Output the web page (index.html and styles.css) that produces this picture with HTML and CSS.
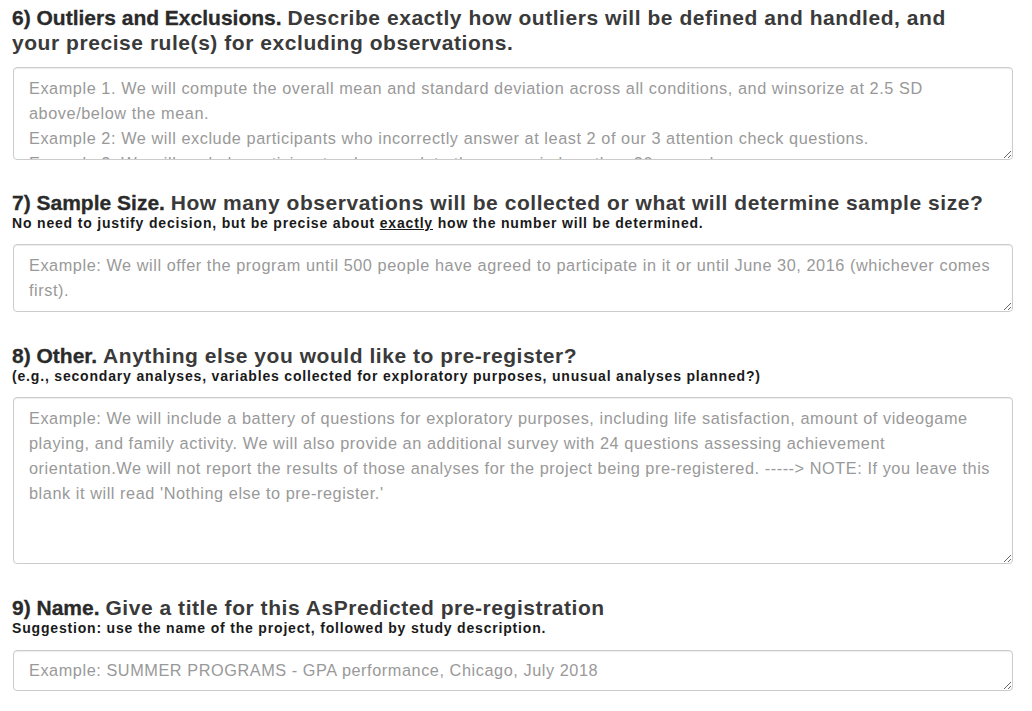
FILE: index.html
```html
<!DOCTYPE html>
<html>
<head>
<meta charset="utf-8">
<link rel="stylesheet" href="styles.css">
</head>
<body>
<div class="form">
  <div class="question first">
    <h4 class="q-title"><b>6) Outliers and Exclusions.</b> <span>Describe exactly how outliers will be defined and handled, and<br>your precise rule(s) for excluding observations.</span></h4>
    <textarea class="field h-92" placeholder="Example 1. We will compute the overall mean and standard deviation across all conditions, and winsorize at 2.5 SD above/below the mean.&#10;Example 2: We will exclude participants who incorrectly answer at least 2 of our 3 attention check questions.&#10;Example 3: We will exclude participants who complete the survey in less than 30 seconds."></textarea>
  </div>
  <div class="question">
    <h4 class="q-title"><b>7) Sample Size.</b> <span>How many observations will be collected or what will determine sample size?</span></h4>
    <div class="q-sub">No need to justify decision, but be precise about <u>exactly</u> how the number will be determined.</div>
    <textarea class="field h-67" placeholder="Example: We will offer the program until 500 people have agreed to participate in it or until June 30, 2016 (whichever comes first)."></textarea>
  </div>
  <div class="question">
    <h4 class="q-title"><b>8) Other.</b> <span>Anything else you would like to pre-register?</span></h4>
    <div class="q-sub">(e.g., secondary analyses, variables collected for exploratory purposes, unusual analyses planned?)</div>
    <textarea class="field h-166" placeholder="Example: We will include a battery of questions for exploratory purposes, including life satisfaction, amount of videogame playing, and family activity. We will also provide an additional survey with 24 questions assessing achievement orientation.We will not report the results of those analyses for the project being pre-registered. -----&gt; NOTE: If you leave this blank it will read 'Nothing else to pre-register.'"></textarea>
  </div>
  <div class="question">
    <h4 class="q-title"><b>9) Name.</b> <span>Give a title for this AsPredicted pre-registration</span></h4>
    <div class="q-sub">Suggestion: use the name of the project, followed by study description.</div>
    <textarea class="field h-41" placeholder="Example: SUMMER PROGRAMS - GPA performance, Chicago, July 2018"></textarea>
  </div>
</div>
</body>
</html>
```

FILE: styles.css
```css
html, body {
  margin: 0;
  padding: 0;
  background: #fff;
}
body {
  font-family: "Liberation Sans", Arial, Helvetica, sans-serif;
  color: #333;
}
.form {
  padding: 5px 0 0 12px;
  width: 1010px;
}
.question {
  margin-bottom: 31px;
}
.question.first {
  margin-bottom: 30px;
}
.q-title {
  margin: 0;
  font-size: 21px;
  line-height: 25px;
  font-weight: bold;
  color: #333;
}
.q-title b {
  font-weight: bold;
  color: #2a2a2a;
  -webkit-text-stroke: 0.3px #2a2a2a;
}
.q-title span {
  color: #3a3a3a;
  letter-spacing: 0.55px;
}
.q-sub {
  font-size: 14px;
  line-height: 16px;
  font-weight: bold;
  color: #1a1a1a;
  letter-spacing: 0.82px;
}
.q-sub u {
  text-decoration: underline;
}
.q-title + .field {
  margin-top: 12px;
}
.q-sub + .field {
  margin-top: 13px;
}
.q-sub + .field.h-41 {
  margin-top: 14px;
}
.field {
  display: block;
  box-sizing: border-box;
  width: 1000px;
  margin-left: 1px;
  padding: 8px 14px 8px 15px;
  border: 1px solid #ccc;
  border-radius: 4px;
  box-shadow: inset 0 1px 1px rgba(0, 0, 0, 0.075);
  font-family: "Liberation Sans", Arial, Helvetica, sans-serif;
  font-size: 16.3px;
  line-height: 25px;
  letter-spacing: 0.56px;
  color: #555;
  background: #fff;
  resize: vertical;
  overflow: hidden;
}
.field::placeholder {
  color: #999;
  opacity: 1;
}
.h-92 { height: 93px; }
.h-67 { height: 68px; }
.h-166 { height: 167px; }
.h-41 { height: 41px; padding-top: 7px; }
```
